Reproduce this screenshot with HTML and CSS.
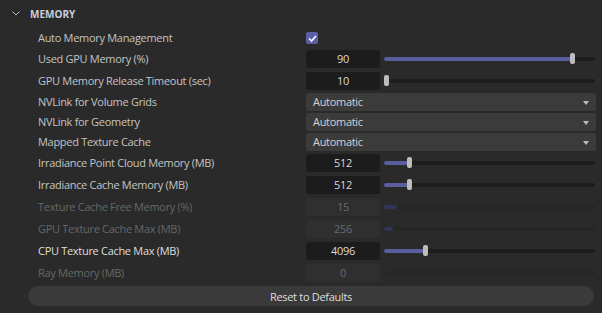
FILE: index.html
```html
<!DOCTYPE html>
<html lang="en">
<head>
  <meta charset="UTF-8">
  <title>Memory</title>
  <link rel="stylesheet" href="styles.css">
</head>
<body>
  <div class="panel">
    <div class="section-head">
      <svg class="chev" width="8" height="5" viewBox="0 0 8 5"><path d="M0.5 0.5 L4 4 L7.5 0.5" fill="none" stroke="#b8bcc8" stroke-width="1"/></svg>
      <span>MEMORY</span>
    </div>

    <div class="rows">
      <div class="row row-check">
        <span class="lbl">Auto Memory Management</span>
        <div class="ctl"><span class="check"><svg width="9" height="7" viewBox="0 0 9 7"><path d="M1 3.5 L3.5 6 L8 1" fill="none" stroke="#fff" stroke-width="1.6"/></svg></span></div>
      </div>
      <div class="row row-num">
        <span class="lbl">Used GPU Memory (%)</span>
        <div class="ctl"><span class="num">90</span><div class="slider"><div class="fill" style="width:89%"></div><span class="thumb" style="left:89%"></span></div></div>
      </div>
      <div class="row row-num">
        <span class="lbl">GPU Memory Release Timeout (sec)</span>
        <div class="ctl"><span class="num">10</span><div class="slider"><div class="fill" style="width:0%"></div><span class="thumb" style="left:1%"></span></div></div>
      </div>
      <div class="row row-drop">
        <span class="lbl">NVLink for Volume Grids</span>
        <div class="ctl"><div class="drop">Automatic<span class="caret"></span></div></div>
      </div>
      <div class="row row-drop">
        <span class="lbl">NVLink for Geometry</span>
        <div class="ctl"><div class="drop">Automatic<span class="caret"></span></div></div>
      </div>
      <div class="row row-drop">
        <span class="lbl">Mapped Texture Cache</span>
        <div class="ctl"><div class="drop">Automatic<span class="caret"></span></div></div>
      </div>
      <div class="row row-num">
        <span class="lbl">Irradiance Point Cloud Memory (MB)</span>
        <div class="ctl"><span class="num">512</span><div class="slider"><div class="fill" style="width:12%"></div><span class="thumb" style="left:12%"></span></div></div>
      </div>
      <div class="row row-num">
        <span class="lbl">Irradiance Cache Memory (MB)</span>
        <div class="ctl"><span class="num">512</span><div class="slider"><div class="fill" style="width:12%"></div><span class="thumb" style="left:12%"></span></div></div>
      </div>
      <div class="row row-num off">
        <span class="lbl">Texture Cache Free Memory (%)</span>
        <div class="ctl"><span class="num">15</span><div class="slider"><div class="fill" style="width:6%"></div></div></div>
      </div>
      <div class="row row-num off">
        <span class="lbl">GPU Texture Cache Max (MB)</span>
        <div class="ctl"><span class="num">256</span><div class="slider"><div class="fill" style="width:4.5%"></div></div></div>
      </div>
      <div class="row row-num hot">
        <span class="lbl">CPU Texture Cache Max (MB)</span>
        <div class="ctl"><span class="num">4096</span><div class="slider"><div class="fill" style="width:19.5%"></div><span class="thumb" style="left:19.5%"></span></div></div>
      </div>
      <div class="row row-num off">
        <span class="lbl">Ray Memory (MB)</span>
        <div class="ctl"><span class="num">0</span><div class="slider"></div></div>
      </div>
    </div>

    <button class="reset">Reset to Defaults</button>
  </div>
</body>
</html>
```

FILE: styles.css
```css
* { box-sizing: border-box; margin: 0; padding: 0; }
body { background: #2a2a2a; font-family: "Open Sans", "Noto Sans", sans-serif; font-size: 11px; letter-spacing: -0.3px; color: #c4c4c4; }
.panel { width: 602px; height: 313px; padding-top: 4px; }

.section-head { height: 20px; display: flex; align-items: center; padding-left: 12px; gap: 10px; font-weight: bold; font-size: 10px; color: #c9cddd; letter-spacing: 0; }
.chev { margin-top: -1px; }

.rows { margin-top: 4px; }
.row { display: grid; grid-template-columns: 268px 1fr; align-items: center; padding-left: 38px; padding-right: 6px; }
.row-check { height: 20px; }
.row-num { height: 22px; }
.row-drop { height: 20px; }
.lbl { white-space: nowrap; margin-top: -1px; }
.ctl { display: flex; align-items: center; }

.check { width: 12px; height: 12px; border-radius: 2px; background: #5b5fa6; display: flex; align-items: center; justify-content: center; }

.num { width: 74px; height: 18px; flex: none; border-radius: 3px; background: #1c1c1c; color: #d9d9d9; text-align: center; line-height: 18px; }
.slider { position: relative; flex: 1; height: 4px; margin-left: 4px; margin-right: 1px; border-radius: 2px; background: #1d1d1d; }
.fill { height: 4px; border-radius: 2px; background: #5a5e9f; }
.thumb { position: absolute; top: -4px; width: 5px; height: 11px; margin-left: -2px; border-radius: 2px; background: #bdbdbd; }

.off .lbl { color: #676767; }
.off .num { background: #2f2f2f; color: #6a6a6a; }
.off .slider { background: #262626; }
.off .fill { background: #333557; }
.hot .lbl { color: #dedede; }

.drop { position: relative; width: 100%; height: 18px; border-radius: 3px; background: #3b3b3b; color: #d2d2d2; line-height: 18px; padding-left: 7px; }
.caret { position: absolute; right: 7px; top: 8px; border-left: 3.5px solid transparent; border-right: 3.5px solid transparent; border-top: 4px solid #bdbdbd; }

.reset { display: block; margin: 2px 0 0 28px; width: 566px; height: 20px; border: none; border-radius: 10px; background: #3a3a3a; color: #dedede; font-family: inherit; font-size: 11px; letter-spacing: -0.3px; }
```
